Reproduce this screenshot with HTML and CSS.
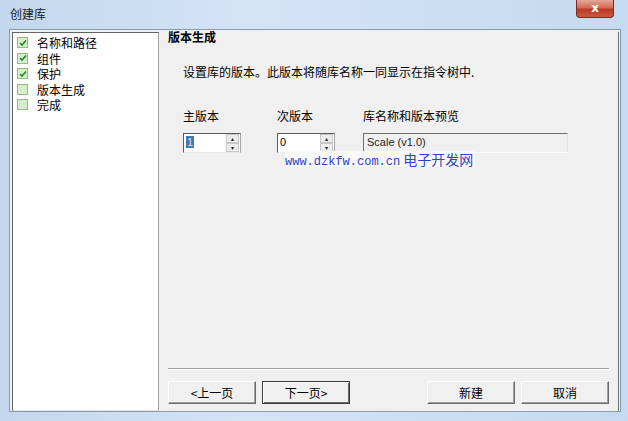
FILE: index.html
```html
<!DOCTYPE html>
<html lang="zh">
<head>
<meta charset="utf-8">
<link rel="stylesheet" href="styles.css">
</head>
<body>
<div class="window">
  <div class="titlebar">
    <span class="title">创建库</span>
    <div class="close"><span>x</span></div>
  </div>
  <div class="client">
    <div class="steps">
      <div class="step"><span class="cb on"><svg viewBox="0 0 8 8" width="8" height="8"><path d="M1 4 L3 6 L7 1.5" fill="none" stroke="#1e8a1e" stroke-width="1.6"/></svg></span>名称和路径</div>
      <div class="step"><span class="cb on"><svg viewBox="0 0 8 8" width="8" height="8"><path d="M1 4 L3 6 L7 1.5" fill="none" stroke="#1e8a1e" stroke-width="1.6"/></svg></span>组件</div>
      <div class="step"><span class="cb on"><svg viewBox="0 0 8 8" width="8" height="8"><path d="M1 4 L3 6 L7 1.5" fill="none" stroke="#1e8a1e" stroke-width="1.6"/></svg></span>保护</div>
      <div class="step"><span class="cb"></span>版本生成</div>
      <div class="step"><span class="cb"></span>完成</div>
    </div>
    <div class="pane">
      <div class="heading">版本生成</div>
      <div class="desc">设置库的版本。此版本将随库名称一同显示在指令树中.</div>
      <div class="fields">
        <div class="field f1">
          <div class="label">主版本</div>
          <div class="spin">
            <div class="spin-input"><span class="sel">1</span></div>
            <div class="spin-btns"><div class="sb">▴</div><div class="sb">▾</div></div>
          </div>
        </div>
        <div class="field f2">
          <div class="label">次版本</div>
          <div class="spin">
            <div class="spin-input">0</div>
            <div class="spin-btns"><div class="sb">▴</div><div class="sb">▾</div></div>
          </div>
        </div>
        <div class="field f3">
          <div class="label">库名称和版本预览</div>
          <div class="preview">Scale (v1.0)</div>
        </div>
      </div>
      <div class="watermark"><span class="url">www.dzkfw.com.cn</span> 电子开发网</div>
      <div class="spacer"></div>
      <div class="sep"></div>
      <div class="buttons">
        <div class="btn">&lt;上一页</div>
        <div class="btn focus">下一页&gt;</div>
        <div class="grow"></div>
        <div class="btn">新建</div>
        <div class="btn">取消</div>
      </div>
    </div>
  </div>
</div>
</body>
</html>
```
FILE: styles.css
```css
* { box-sizing: border-box; }
html, body { margin: 0; padding: 0; }
body {
  width: 628px; height: 421px; overflow: hidden;
  font-family: "Noto Sans CJK SC", "Liberation Sans", sans-serif;
  font-size: 12px; color: #000;
}
.window {
  width: 628px; height: 421px;
  background: linear-gradient(90deg, #c3d8ee 0%, #d3e4f5 40%, #c5daf0 100%);
  display: flex; flex-direction: column;
  padding: 0 7px 9px 9px;
}
.titlebar {
  height: 29px; display: flex; align-items: flex-start; position: relative;
}
.title { margin-top: 5px; margin-left: 1px; font-size: 12px; color: #1a1a1a; line-height: 18px; }
.close {
  position: absolute; right: 7px; top: 0;
  width: 38px; height: 18px;
  border: 1px solid #7a2a22; border-top: none;
  border-radius: 0 0 4px 4px;
  background: linear-gradient(#e7a597 0%, #d46b57 45%, #b83a24 55%, #c85a3f 100%);
  display: flex; align-items: center; justify-content: center;
}
.close span { color: #fff; font-family: "DejaVu Sans", sans-serif; font-weight: bold; font-size: 12px; line-height: 12px; margin-top: -2px; }
.client {
  flex: 1; display: flex;
  background: #f0f0f0;
  border: 1px solid #8d9aab;
  padding: 2px 1px 0 2px;
}
.steps {
  width: 147px; background: #fff;
  border-top: 1px solid #646464; border-left: 1px solid #646464;
  border-right: 1px solid #a0a0a0; border-bottom: 1px solid #e3e3e3;
  padding-top: 2px;
}
.step { height: 15.5px; display: flex; align-items: center; line-height: 15px; }
.cb {
  width: 11px; height: 11px; margin: 0 9px 0 4px;
  border: 1px solid #8fbf7f; background: #d6ecce;
  display: flex; align-items: center; justify-content: center;
}
.pane {
  flex: 1; display: flex; flex-direction: column;
  padding: 0 9px 0 9px;
  border-right: 1px solid #6c7480;
}
.heading { font-weight: bold; line-height: 16px; margin-top: -3px; }
.desc { margin-top: 19px; margin-left: 15px; line-height: 16px; }
.fields { display: flex; margin-left: 15px; margin-top: 28px; }
.field { display: flex; flex-direction: column; }
.f1 { width: 94px; }
.f2 { width: 86px; }
.f3 { width: 205px; }
.label { line-height: 16px; height: 16px; }
.spin { margin-top: 9px; display: flex; height: 20px; width: 58px; }
.spin-input {
  flex: 1; background: #fff;
  border-top: 1px solid #5b5b5b; border-left: 1px solid #5b5b5b;
  border-bottom: 1px solid #e8e8e8;
  font-family: "Liberation Sans", sans-serif; font-size: 11px;
  padding-left: 2px; line-height: 16px;
}
.sel { background: #3b79b8; color: #dfe8f2; padding: 0 1px; }
.spin-btns { width: 16px; display: flex; flex-direction: column; border-top: 1px solid #5b5b5b; border-right: 1px solid #a8a8a8; border-bottom: 1px solid #e8e8e8; background: #fff; }
.sb {
  flex: 1; background: #ececec; border: 1px solid #c8c8c8; margin: 0 1px;
  font-size: 6px; line-height: 7px; text-align: center; color: #222;
}
.preview {
  margin-top: 9px; height: 20px; background: #f0f0f0;
  border-top: 1px solid #6f6f6f; border-left: 1px solid #6f6f6f;
  border-bottom: 1px solid #fff; border-right: 1px solid #e4e4e4;
  font-family: "Liberation Sans", sans-serif; font-size: 11px; line-height: 17px; padding-left: 3px; color: #222;
}
.watermark {
  margin-left: 117px; margin-top: -2px; width: 190px; height: 16px;
  background: #f8f8fb; color: #2b44c8; line-height: 16px; font-size: 14px; white-space: nowrap;
}
.watermark .url { font-family: "Liberation Mono", monospace; font-size: 12px; }
.spacer { flex: 1; }
.sep { height: 2px; border-top: 1px solid #a0a0a0; border-bottom: 1px solid #fff; }
.buttons { display: flex; gap: 6px; margin-top: 11px; margin-bottom: 7px; }
.grow { flex: 1; }
.btn {
  width: 88px; height: 23px; display: flex; align-items: center; justify-content: center;
  background: #f0f0f0;
  border-top: 1px solid #fff; border-left: 1px solid #fff;
  border-right: 1px solid #6a6a6a; border-bottom: 1px solid #6a6a6a;
  box-shadow: inset -1px -1px 0 #a0a0a0;
  font-size: 12px;
}
.btn.focus { border: 1px solid #3a3a3a; box-shadow: inset 1px 1px 0 #fff, inset -1px -1px 0 #6a6a6a; }
```
